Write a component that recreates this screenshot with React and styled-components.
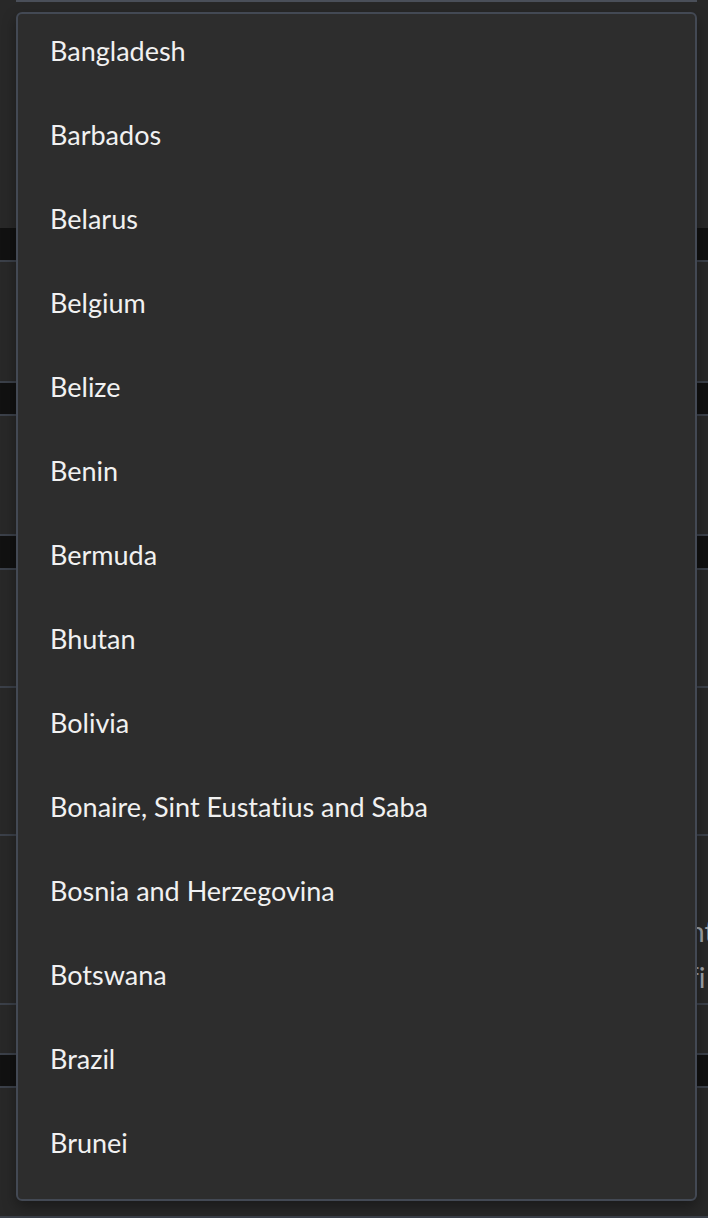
import React from "react";
import styled, { createGlobalStyle } from "styled-components";

const Global = createGlobalStyle`
  html, body { margin: 0; padding: 0; background: #262626; }
  body {
    overflow: hidden;
    font-family: "Lato", "Liberation Sans", sans-serif;
    font-variant-ligatures: none;
    font-feature-settings: "liga" 0, "clig" 0;
  }
  #root { width: 708px; height: 1218px; }
`;

const Page = styled.div`
  position: relative;
  width: 708px;
  height: 1218px;
  display: flex;
  flex-direction: column;
  background: #262626;
  overflow: hidden;
`;

const Panel = styled.div`
  height: ${(p) => p.$h}px;
  flex-shrink: 0;
  background: #282828;
  box-sizing: border-box;
  border-bottom: ${(p) => (p.$line ? "2px solid #3b4049" : "none")};
  display: flex;
  flex-direction: column;
`;

const Band = styled.div`
  height: ${(p) => p.$h}px;
  flex-shrink: 0;
  background: #111111;
  box-sizing: border-box;
  border-bottom: 2px solid #3b4049;
`;

const InputEdge = styled.div`
  margin: 0 11px 0 16px;
  height: 2px;
  background: #4a4f59;
`;

const InnerCard = styled.div`
  margin-top: 146px;
  height: 171px;
  box-sizing: border-box;
  border-top: 2px solid #3b4049;
  border-bottom: 2px solid #3b4049;
  display: flex;
  flex-direction: column;
  padding: 75px 0 0 689px;
  gap: 6px;
  color: #9ea3a9;
  font-size: 28px;
  line-height: 40px;
  white-space: nowrap;
  overflow: hidden;
`;

const Popover = styled.div`
  position: absolute;
  top: 12px;
  left: 16px;
  width: 681px;
  height: 1189px;
  box-sizing: border-box;
  background: #2d2d2d;
  border: 2px solid #434954;
  border-radius: 6px;
  box-shadow: 0 6px 14px rgba(0, 0, 0, 0.35);
  padding: 0 0 10px;
  overflow: hidden;
`;

const List = styled.ul`
  list-style: none;
  margin: 0;
  padding: 0;
  display: flex;
  flex-direction: column;
`;

const Item = styled.li`
  height: 84px;
  box-sizing: border-box;
  padding: 0 0 10px 32px;
  line-height: 74px;
  font-size: 27px;
  color: #f1f1f1;
  white-space: nowrap;
`;

const countries = [
  "Bangladesh",
  "Barbados",
  "Belarus",
  "Belgium",
  "Belize",
  "Benin",
  "Bermuda",
  "Bhutan",
  "Bolivia",
  "Bonaire, Sint Eustatius and Saba",
  "Bosnia and Herzegovina",
  "Botswana",
  "Brazil",
  "Brunei",
];

export default function App() {
  return (
    <>
      <Global />
      <Page>
        <Panel $h={228}>
          <InputEdge />
        </Panel>
        <Band $h={34} />
        <Panel $h={121} $line />
        <Band $h={33} />
        <Panel $h={120} $line />
        <Band $h={34} />
        <Panel $h={118} $line />
        <Panel $h={367} $line>
          <InnerCard>
            <span>nt</span>
            <span>fi</span>
          </InnerCard>
        </Panel>
        <Band $h={33} />
        <Panel $h={130} $line />
        <Popover>
          <List>
            {countries.map((c) => (
              <Item key={c}>{c}</Item>
            ))}
          </List>
        </Popover>
      </Page>
    </>
  );
}
